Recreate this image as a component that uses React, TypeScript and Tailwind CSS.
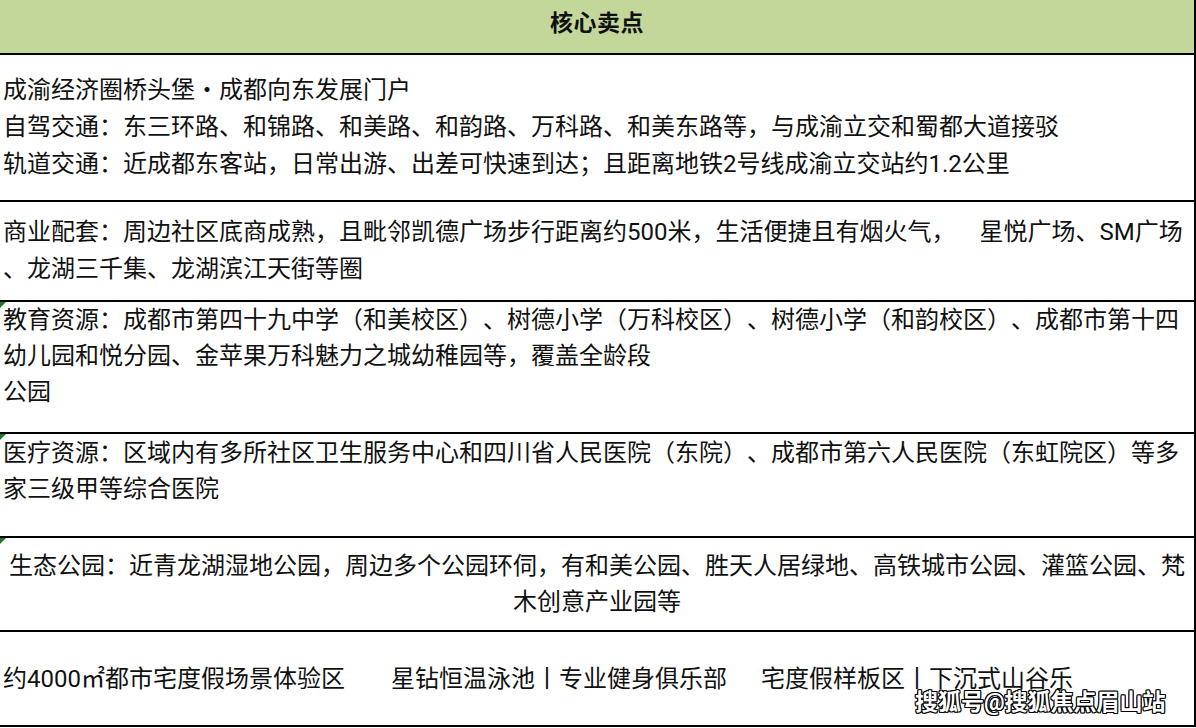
import React from 'react';

// one corner mark like Excel's green error indicator
function Flag() {
  return (
    <span className="absolute left-0 top-0 h-0 w-0 border-t-[6px] border-r-[6px] border-t-[#1f7a1f] border-r-transparent" />
  );
}

const font = "font-['Roboto','Noto_Sans_CJK_SC',sans-serif]";

export default function App() {
  return (
    <div className={`w-[1196px] h-[728px] bg-white text-[#111] ${font} overflow-hidden [text-spacing-trim:space-all]`}>
      <div className="relative flex h-[727px] w-[1196px] flex-col border-r-2 border-black">
        {/* Header */}
        <div className="flex h-[55px] shrink-0 items-center justify-center border-b-2 border-black bg-[#c4d79b] pb-[4px]">
          <span className="text-[23px] font-bold tracking-[0.5px]">核心卖点</span>
        </div>

        {/* Location / transport */}
        <div className="flex h-[147px] shrink-0 flex-col justify-center border-b-2 border-black pl-[3px] text-[24px] leading-[37px] whitespace-nowrap">
          <div>成渝经济圈桥头堡・成都向东发展门户</div>
          <div>自驾交通：东三环路、和锦路、和美路、和韵路、万科路、和美东路等，与成渝立交和蜀都大道接驳</div>
          <div>轨道交通：近成都东客站，日常出游、出差可快速到达；且距离地铁2号线成渝立交站约1.2公里</div>
        </div>

        {/* Commerce */}
        <div className="flex h-[100px] shrink-0 flex-col justify-center border-b-2 border-black pl-[3px] text-[24px] leading-[37px] whitespace-pre">
          <div>
            商业配套：周边社区底商成熟，且毗邻凯德广场步行距离约500米，生活便捷且有烟火气，
            <span className="ml-[24px]">星悦广场、SM广场</span>
          </div>
          <div>、龙湖三千集、龙湖滨江天街等圈</div>
        </div>

        {/* Education */}
        <div className="relative flex h-[132px] shrink-0 flex-col border-b-2 border-black pl-[3px] text-[24px] leading-[36px] whitespace-nowrap">
          <Flag />
          <div>教育资源：成都市第四十九中学（和美校区）、树德小学（万科校区）、树德小学（和韵校区）、成都市第十四</div>
          <div>幼儿园和悦分园、金苹果万科魅力之城幼稚园等，覆盖全龄段</div>
          <div>公园</div>
        </div>

        {/* Medical */}
        <div className="relative flex h-[104px] shrink-0 flex-col border-b-2 border-black pl-[3px] pt-[1px] text-[24px] leading-[36px] whitespace-nowrap">
          <Flag />
          <div>医疗资源：区域内有多所社区卫生服务中心和四川省人民医院（东院）、成都市第六人民医院（东虹院区）等多</div>
          <div>家三级甲等综合医院</div>
        </div>

        {/* Parks */}
        <div className="relative flex h-[94px] shrink-0 flex-col justify-center border-b-2 border-black text-center text-[24px] leading-[36px] whitespace-nowrap">
          <Flag />
          <div>生态公园：近青龙湖湿地公园，周边多个公园环伺，有和美公园、胜天人居绿地、高铁城市公园、灌篮公园、梵</div>
          <div>木创意产业园等</div>
        </div>

        {/* Amenities */}
        <div className="relative flex flex-1 items-center border-b-2 border-black pl-[3px] text-[24px] leading-[36px] whitespace-nowrap">
          <span>约4000㎡都市宅度假场景体验区</span>
          <span className="ml-[46px]">星钻恒温泳池丨专业健身俱乐部</span>
          <span className="ml-[34px]">宅度假样板区丨下沉式山谷乐</span>
          <span className="absolute left-[915px] top-[57px] text-[23px] font-bold leading-[28px] text-white [text-shadow:1px_1px_0_#000,-1px_-1px_0_#000,1px_-1px_0_#000,-1px_1px_0_#000,0_1px_0_#000,0_-1px_0_#000,1px_0_0_#000,-1px_0_0_#000]">
            搜狐号@搜狐焦点眉山站
          </span>
        </div>
      </div>
    </div>
  );
}
